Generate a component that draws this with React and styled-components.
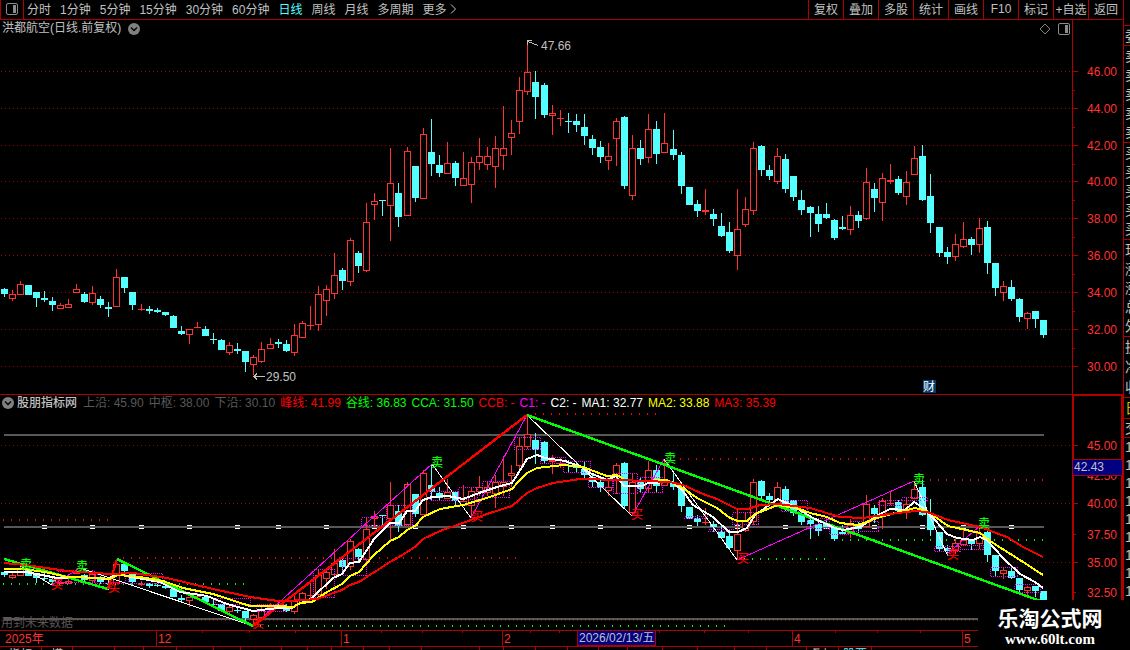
import styled, { createGlobalStyle } from "styled-components";

const colors = {
  frame: "#b00000",
  up: "#ff3232",
  down: "#54ffff",
  text: "#c0c0c0",
  dim: "#585858",
  grid: "#a00000",
};

const GlobalStyle = createGlobalStyle`
  * {
    box-sizing: border-box;
  }
  body {
    margin: 0;
    background: #000;
    color: ${colors.text};
    font-family: "Liberation Sans", "Noto Sans CJK SC", sans-serif;
    font-size: 12px;
  }
`;

const Page = styled.div`
  position: relative;
  display: grid;
  grid-template-columns: minmax(0, 1fr) 7px;
  height: 100vh;
  overflow: hidden;
`;

const Main = styled.main`
  display: flex;
  flex-direction: column;
  min-height: 0;
`;

const Toolbar = styled.nav`
  display: flex;
  justify-content: space-between;
  height: 20px;
  border-bottom: 1px solid ${colors.frame};
`;

const Periods = styled.div`
  display: flex;
  align-items: center;
  gap: 9px;
`;

const Actions = styled.div`
  display: flex;
`;

const BarButton = styled.button`
  display: flex;
  align-items: center;
  padding: 0 0 2px;
  border: none;
  background: none;
  color: ${(props) => (props.$active ? colors.down : colors.text)};
  font: inherit;
  white-space: nowrap;
  cursor: pointer;
`;

const LayoutButton = styled(BarButton)`
  justify-content: center;
  align-self: stretch;
  width: 24px;
  margin-right: -6px;
  border: 1px solid ${colors.frame};
  border-width: 0 1px;
`;

const ActionButton = styled(BarButton)`
  justify-content: center;
  width: 35px;
  border-left: 1px solid ${colors.frame};
`;

const Panel = styled.section`
  display: grid;
  grid-template-columns: minmax(0, 1fr) 51px;
`;

const Plot = styled.div`
  min-width: 0;
`;

const PlotHeader = styled.header`
  display: flex;
  align-items: center;
  gap: 7px;
  height: 18px;
  padding: 0 2px;
  line-height: 16px;
`;

const IndicatorHeader = styled(PlotHeader)`
  gap: 5px;
  padding-bottom: 2px;
  border-top: 1px solid ${colors.frame};
  white-space: nowrap;
`;

const Title = styled.h1`
  margin: 0;
  padding-bottom: 2px;
  font-size: 12px;
  font-weight: 400;
`;

const IndicatorName = styled.h2`
  margin: 0 1px 0 -2px;
  font-size: 12px;
  font-weight: 500;
`;

const Reading = styled.span`
  color: ${(props) => props.$color};
`;

const HeaderTools = styled.div`
  display: flex;
  align-items: center;
  gap: 7px;
  margin-left: auto;
`;

const Drawing = styled.svg`
  display: block;
  width: 100%;
  height: auto;
  font-size: 12px;
`;

const TabStrip = styled.div`
  display: flex;
  flex: 1;
  min-height: 0;
  overflow: hidden;
`;

const StripTab = styled.span`
  width: ${(props) => props.$width}px;
  border-right: 1px solid ${colors.frame};
  color: ${(props) => (props.$active ? colors.down : colors.text)};
  line-height: 17px;
  text-align: center;
  white-space: nowrap;
`;

const Quotes = styled.aside`
  border-left: 1px solid ${colors.frame};
  overflow: hidden;
`;

const QuoteGroup = styled.div`
  display: flex;
  flex-direction: column;
  height: ${(props) => props.$height}px;
  padding-left: 1px;
  border-bottom: ${(props) => (props.$open ? "none" : `1px solid ${colors.frame}`)};
  color: ${(props) => props.$color || colors.text};
  font-size: 14px;
`;

const QuoteRow = styled.span`
  display: flex;
  flex: 1;
  align-items: center;
  min-height: 0;
  line-height: 1;
  white-space: nowrap;
`;

const SiteBadge = styled.div`
  position: absolute;
  right: 0;
  bottom: 0;
  display: flex;
  flex-direction: column;
  align-items: center;
  width: 152px;
  height: 50px;
  padding: 8px 8px 0 0;
  background: #000;
  color: #fff;
`;

const SiteName = styled.strong`
  font-size: 21px;
  line-height: 22px;
`;

const SiteUrl = styled.a`
  color: #fff;
  font-family: "Liberation Serif", serif;
  font-size: 15px;
  font-weight: 700;
  line-height: 18px;
  text-decoration: none;
`;

// one row per day: high, open, close, low, as heights on the price chart
const days = [
  [288, 289, 294, 297], [290, 299, 294, 301], [281, 295, 284, 295], [285, 285, 295, 295],
  [292, 292, 298, 307], [291, 298, 300, 302], [297, 301, 305, 311], [303, 309, 305, 309],
  [299, 308, 304, 308], [284, 293, 289, 293], [292, 294, 302, 303], [286, 303, 293, 305],
  [296, 299, 305, 308], [302, 307, 309, 317], [269, 307, 277, 307], [277, 277, 288, 293],
  [292, 292, 305, 310], [304, 310, 309, 311], [306, 309, 311, 314], [308, 310, 312, 313],
  [312, 312, 315, 316], [315, 316, 328, 328], [326, 331, 334, 335], [329, 335, 329, 344],
  [322, 328, 327, 328], [326, 329, 336, 336], [333, 339, 340, 344], [339, 340, 350, 350],
  [342, 353, 345, 355], [343, 349, 351, 354], [351, 351, 362, 372], [355, 365, 357, 375],
  [342, 362, 349, 363], [338, 349, 344, 349], [339, 342, 344, 348], [340, 344, 351, 352],
  [324, 353, 335, 356], [321, 338, 323, 338], [306, 326, 325, 330], [286, 325, 294, 331],
  [285, 301, 289, 316], [253, 294, 275, 299], [268, 270, 281, 290], [238, 282, 240, 286],
  [251, 253, 266, 273], [203, 271, 222, 272], [193, 205, 201, 220], [200, 200, 201, 216],
  [148, 206, 183, 241], [183, 193, 217, 227], [147, 216, 151, 216], [166, 166, 198, 202],
  [128, 199, 134, 199], [119, 152, 164, 176], [155, 165, 173, 177], [142, 174, 163, 174],
  [161, 163, 178, 186], [152, 186, 178, 186], [157, 185, 162, 203], [138, 163, 156, 170],
  [147, 165, 156, 170], [136, 167, 148, 188], [106, 156, 148, 170], [120, 138, 133, 155],
  [77, 122, 90, 134], [42, 92, 72, 95], [71, 82, 97, 119], [83, 85, 115, 118],
  [105, 116, 113, 135], [110, 119, 118, 126], [113, 121, 122, 133], [114, 121, 125, 132],
  [114, 127, 136, 145], [135, 139, 148, 155], [141, 147, 157, 163], [143, 161, 156, 170],
  [118, 139, 121, 166], [116, 117, 186, 189], [135, 196, 148, 200], [140, 148, 159, 165],
  [114, 158, 129, 163], [121, 129, 154, 164], [113, 153, 143, 153], [130, 149, 155, 160],
  [152, 155, 186, 194], [187, 187, 205, 205], [200, 204, 211, 217], [189, 212, 210, 215],
  [209, 214, 219, 226], [213, 226, 236, 237], [222, 232, 251, 253], [189, 256, 229, 270],
  [197, 225, 209, 227], [142, 211, 148, 215], [145, 146, 170, 176], [165, 170, 176, 180],
  [148, 182, 156, 184], [154, 159, 189, 193], [176, 176, 197, 201], [190, 200, 210, 215],
  [206, 207, 213, 237], [206, 214, 224, 232], [203, 214, 218, 219], [219, 220, 238, 240],
  [216, 227, 229, 230], [206, 230, 215, 235], [211, 215, 221, 228], [168, 219, 182, 220],
  [183, 189, 198, 212], [173, 203, 178, 221], [164, 182, 180, 184], [176, 179, 193, 195],
  [171, 197, 182, 205], [146, 175, 158, 175], [145, 156, 200, 201], [174, 196, 223, 233],
  [227, 227, 253, 257], [247, 252, 257, 264], [234, 257, 244, 261], [222, 247, 239, 248],
  [237, 239, 245, 255], [218, 245, 228, 253], [221, 227, 263, 274], [263, 263, 288, 296],
  [281, 293, 286, 301], [280, 287, 299, 301], [298, 299, 317, 322], [312, 319, 313, 329],
  [311, 311, 319, 328], [320, 320, 335, 338],
];

const dayX = (i) => Math.floor(4.036 + 8.06004 * i);
const toIndicator = (y) => Math.round(433.8 + (y - 71.5) * 0.6345);

const ma1 =
  "4,572 25,572 37,574 57,578 80,577 108,579 117,574 137,578 160,582 180,592 207,596 227,604 253,611 278,608 292,608 297,605 312,598 333,578 342,574 350,563 359,562 374,539 390,523 399,523 407,511 415,511 423,500 432,497 448,496 463,499 482,492 497,487 512,483 519,472 527,459 537,455 545,458 565,461 582,467 590,473 607,480 616,476 624,486 642,486 648,483 672,482 682,490 693,505 713,517 729,532 738,532 747,528 755,515 765,508 778,499 793,506 813,518 835,528 843,530 860,527 880,514 890,509 905,510 914,502 922,507 935,520 947,534 957,538 973,540 980,537 987,540 1003,558 1020,574 1035,582 1043,588";
const ma2 =
  "4,569 25,569 50,573 67,577 100,578 110,579 118,575 140,577 163,581 183,588 213,594 250,606 278,606 293,607 300,603 312,602 327,592 342,584 350,576 359,572 374,555 390,541 399,537 407,530 415,526 423,517 440,509 463,505 487,498 512,489 519,481 527,473 537,468 563,465 583,467 607,476 617,475 625,480 640,481 667,480 680,486 697,498 717,508 730,518 738,521 747,521 755,514 778,505 797,508 810,513 827,517 840,523 858,525 880,517 903,511 915,508 927,511 948,526 980,533 993,543 1020,560 1043,575";
const ma3 =
  "4,563 25,565 67,571 110,574 133,573 167,578 213,589 250,597 278,601 288,601 317,599 342,590 350,585 359,582 390,562 399,557 415,547 423,539 440,531 463,523 487,514 512,506 527,493 537,488 553,483 580,479 620,480 670,482 683,485 703,494 717,499 737,509 748,509 760,505 778,504 810,508 840,517 863,518 890,514 915,511 927,512 948,520 980,527 1007,537 1023,547 1043,557";

const trendLines = [
  ["#00ff00", "4,559 108,589"],
  ["#ff0000", "108,589 117,559"],
  ["#00ff00", "117,559 253,626"],
  ["#ff0000", "253,626 527,415"],
  ["#00ff00", "527,415 1043,602"],
];

const swings = [
  ["#fff", "20,566 52,585"],
  ["#ff00ff", "52,585 80,568"],
  ["#fff", "80,568 253,626"],
  ["#ff00ff", "253,626 432,464"],
  ["#fff", "432,464 471,518"],
  ["#ff00ff", "471,518 527,415"],
  ["#fff", "527,415 632,516"],
  ["#ff00ff", "632,516 664,459"],
  ["#fff", "664,459 737,560"],
  ["#ff00ff", "737,560 914,481"],
  ["#fff", "914,481 947,554"],
  ["#ff00ff", "947,554 980,526"],
];

// from, to, height, color
const levels = [
  [3, 108, 520, "#ff0000"],
  [3, 246, 584, "#00ff00"],
  [123, 520, 558, "#ff0000"],
  [260, 730, 626, "#00ff00"],
  [535, 658, 414, "#ff0000"],
  [680, 907, 459, "#ff0000"],
  [744, 828, 559, "#00ff00"],
  [834, 1044, 540, "#00ff00"],
  [922, 1044, 480, "#ff0000"],
];

const pivots = [
  [57, 571, 94, 582], [94, 574, 125, 583], [128, 573, 162, 583], [215, 598, 250, 604],
  [256, 604, 285, 611], [313, 569, 334, 597], [342, 558, 366, 575], [361, 517, 386, 525],
  [386, 505, 412, 525], [430, 491, 458, 500], [458, 487, 477, 499], [482, 481, 509, 497],
  [514, 437, 540, 449], [540, 457, 565, 463], [563, 461, 590, 472], [588, 478, 612, 487],
  [613, 473, 637, 493], [639, 477, 662, 492], [684, 516, 707, 518], [708, 529, 733, 531],
  [732, 512, 758, 524], [781, 500, 807, 511], [807, 518, 829, 528], [829, 527, 852, 534],
  [850, 521, 878, 531], [878, 500, 901, 505], [901, 497, 927, 500], [934, 546, 960, 551],
  [960, 545, 983, 549], [990, 567, 1017, 576], [1014, 584, 1040, 592],
];

const signals = [
  ["卖", 26, 565], ["卖", 82, 567], ["卖", 437, 463], ["卖", 670, 459],
  ["卖", 919, 480], ["卖", 984, 524], ["买", 57, 585], ["买", 114, 588],
  ["买", 258, 624], ["买", 477, 517], ["买", 637, 515], ["买", 743, 559],
  ["买", 953, 555],
];

const beads = [5, 11, 17, 23, 29, 34, 40, 46, 51, 57, 63, 68, 74, 80, 85, 91, 97, 102, 108, 114, 119, 125];

const priceTicks = [71, 108, 145, 181, 218, 255, 292, 329, 366];

const indicatorTicks = [
  ["45.00", 445],
  ["42.50", 475],
  ["40.00", 503],
  ["37.50", 534],
  ["35.00", 562],
  ["32.50", 592],
];

const months = [
  ["2025年", 0],
  ["12", 156],
  ["1", 341],
  ["2", 502],
  ["4", 792],
  ["5", 962],
];

const weekTicks = [202, 249, 295, 381, 422, 462, 530, 559, 659, 704, 748, 835, 877, 920];

const periods = ["分时", "1分钟", "5分钟", "15分钟", "30分钟", "60分钟", "日线", "周线", "月线", "多周期"];

const actions = ["复权", "叠加", "多股", "统计", "画线", "F10", "标记", "+自选", "返回"];

const readings = [
  ["上沿: 45.90", colors.dim],
  ["中枢: 38.00", colors.dim],
  ["下沿: 30.10", colors.dim],
  ["峰线: 41.99", "#ff0000"],
  ["谷线: 36.83", "#00ff00"],
  ["CCA: 31.50", "#00ff00"],
  ["CCB: -", "#ff0000"],
  ["C1: -", "#ff00ff"],
  ["C2: -", "#fff"],
  ["MA1: 32.77", "#fff"],
  ["MA2: 33.88", "#ffff00"],
  ["MA3: 35.39", "#ff0000"],
];

const quoteGroups = [
  { height: 26, rows: [] },
  { height: 20, rows: ["委比"] },
  { height: 97, rows: ["卖五", "卖四", "卖三", "卖二", "卖一"] },
  { height: 97, rows: ["买一", "买二", "买三", "买四", "买五"] },
  { height: 97, rows: ["现价", "涨跌", "涨幅", "总量", "外盘"] },
  { height: 61, rows: ["换手", "净资", "收益"] },
  { height: 21, rows: ["日"], color: "#c8c800" },
  { height: 19, rows: ["交易"] },
  { height: 162, rows: Array(9).fill("14:5"), open: true },
];

const tabs = [42, 31, 42, 29, 33, 37, 27, 41, 26, 24, 32, 26, 32, 58, 24, 32, 32, 31, 29, 35, 35, 37, 32, 40, 32, 33];
const tabNames = { 0: "指标", 1: "模", 24: "叠加", 25: "股票" };

const PanelIcon = () => (
  <svg width="12" height="12" viewBox="0 0 12 12" aria-hidden="true">
    <rect x="0.5" y="0.5" width="11" height="11" rx="1.5" fill="none" stroke="#8c8c8c" />
    <rect x="7" y="2" width="3" height="8" fill="#8c8c8c" />
  </svg>
);

const ChevronIcon = () => (
  <svg width="12" height="12" viewBox="0 0 12 12" aria-hidden="true">
    <circle cx="6" cy="6" r="6" fill="#808080" />
    <path d="M3 4.5l3 3 3-3" fill="none" stroke="#000" strokeWidth="1.4" />
  </svg>
);

const Candles = ({ scale = (y) => y }) =>
  days.map((day, i) => {
    const [high, open, close, low] = day.map(scale);
    const x = dayX(i);
    const rising = day[2] < day[1];
    const color = rising ? colors.up : colors.down;
    const top = Math.min(open, close);
    const height = Math.max(1, Math.abs(open - close));
    return (
      <g key={i}>
        <rect x={x} y={high} width="1" height={Math.max(1, low - high)} fill={color} />
        <rect x={x - 3} y={top} width="7" height={height} fill={color} />
        {rising && height > 2 && (
          <rect x={x - 2} y={top + 1} width="5" height={height - 2} fill="#000" />
        )}
      </g>
    );
  });

const GridLine = ({ y }) => (
  <line x1="1" x2="1072" y1={y + 0.5} y2={y + 0.5} stroke={colors.grid} strokeDasharray="1 3" />
);

const PriceChart = () => (
  <Drawing viewBox="0 38 1072 356" shapeRendering="crispEdges" role="img" aria-label="日线">
    {priceTicks.map((y) => (
      <GridLine key={y} y={y} />
    ))}
    <Candles />
    <g stroke={colors.text} fill="none">
      <path d="M527.5 41.5l11 4M527.5 45v-4.5h4" />
      <path d="M254 376.5h11M257 373.5l-3 3 3 3" />
    </g>
    <text x="541" y="50" fill={colors.text}>47.66</text>
    <text x="266" y="381" fill={colors.text}>29.50</text>
    <rect x="923" y="380" width="13" height="13" fill="#003a70" />
    <text x="923" y="391" fill="#fff">财</text>
  </Drawing>
);

const PriceAxis = () => (
  <Drawing viewBox="1072 20 51 374" shapeRendering="crispEdges">
    <rect x="1072" y="20" width="1" height="374" fill={colors.frame} />
    {priceTicks.map((y, i) => (
      <g key={y}>
        <rect x="1073" y={y} width="5" height="1" fill={colors.frame} />
        {i < 8 && <rect x="1073" y={y + 19} width="2" height="1" fill={colors.frame} />}
        <text x="1087" y={y + 5} fill={colors.up}>{`${46 - i * 2}.00`}</text>
      </g>
    ))}
  </Drawing>
);

const IndicatorChart = () => (
  <Drawing viewBox="0 412 1072 218" shapeRendering="crispEdges" role="img" aria-label="股朋指标网">
    {[445, 503, 562, 620].map((y) => (
      <GridLine key={y} y={y} />
    ))}
    {[434, 526, 618].map((y) => (
      <rect key={y} x="4" y={y} width="1040" height="2" fill={colors.dim} />
    ))}
    {levels.map(([from, to, y, color]) => (
      <line key={y} x1={from} x2={to} y1={y} y2={y} stroke={color} strokeWidth="2" strokeDasharray="1 7" />
    ))}
    {beads.map((i) => (
      <g key={i} fill="#fff">
        <rect x={dayX(i) - 2} y="525" width="5" height="1" />
        <rect x={dayX(i) - 2} y="528" width="5" height="1" />
      </g>
    ))}
    <Candles scale={toIndicator} />
    <g fill="none" stroke="#ff00ff" strokeDasharray="1 1">
      {pivots.map(([x1, y1, x2, y2]) => (
        <rect key={x1} x={x1 + 0.5} y={y1 + 0.5} width={x2 - x1} height={y2 - y1} />
      ))}
    </g>
    <g fill="none">
      {swings.map(([color, points]) => (
        <polyline key={points} points={points} stroke={color} />
      ))}
    </g>
    <g fill="none" strokeWidth="2">
      {trendLines.map(([color, points]) => (
        <polyline key={points} points={points} stroke={color} strokeWidth="2.4" />
      ))}
      <polyline points={ma1} stroke="#fff" />
      <polyline points={ma2} stroke="#ffff00" />
      <polyline points={ma3} stroke="#ff0000" />
    </g>
    {signals.map(([label, x, y]) => (
      <text
        key={x}
        x={x}
        y={y + 4}
        textAnchor="middle"
        fontWeight="500"
        fill={label === "卖" ? "#00ff00" : "#ff0000"}
      >
        {label}
      </text>
    ))}
    <text x="1" y="627" fill={colors.dim}>用到未来数据</text>
  </Drawing>
);

const IndicatorAxis = () => (
  <Drawing viewBox="1072 394 51 236" shapeRendering="crispEdges">
    {indicatorTicks.map(([label, y], i) => (
      <g key={label}>
        <rect x="1073" y={y} width={i % 2 ? 3 : 5} height="1" fill={colors.frame} />
        <text x="1087" y={y + 5} fill={colors.up}>{label}</text>
      </g>
    ))}
    <rect x="1073" y="395" width="49" height="236" fill="none" stroke={colors.frame} strokeWidth="2" />
    <rect x="1074" y="459" width="48" height="17" fill={colors.frame} />
    <rect x="1073" y="460" width="49" height="15" fill="#000080" />
    <text x="1074" y="471" fill={colors.text}>42.43</text>
  </Drawing>
);

const DateAxis = () => (
  <Drawing viewBox="0 630 1123 17" shapeRendering="crispEdges">
    <g fill={colors.frame}>
      <rect x="0" y="630" width="1123" height="1" />
      <rect x="0" y="646" width="1123" height="1" />
      {weekTicks.map((x) => (
        <rect key={x} x={x} y="631" width="1" height="2" />
      ))}
    </g>
    {months.map(([label, x]) => (
      <g key={label}>
        {x > 0 && <rect x={x} y="631" width="1" height="15" fill={colors.frame} />}
        <text x={x > 0 ? x + 2 : 5} y="643" fill={colors.up}>{label}</text>
      </g>
    ))}
    <rect x="577" y="631" width="79" height="15" fill={colors.frame} />
    <rect x="578" y="631" width="77" height="14" fill="#000080" />
    <text x="579" y="642" fill={colors.text}>2026/02/13/五</text>
  </Drawing>
);

const App = () => {
  return (
    <Page>
      <GlobalStyle />
      <Main>
        <Toolbar>
          <Periods>
            <LayoutButton type="button" aria-label="布局">
              <PanelIcon />
            </LayoutButton>
            {periods.map((name) => (
              <BarButton key={name} type="button" $active={name === "日线"}>
                {name}
              </BarButton>
            ))}
            <BarButton type="button">
              更多
              <svg width="10" height="10" viewBox="0 0 10 10" aria-hidden="true">
                <path d="M4 0.5l4.5 4.5L4 9.5" fill="none" stroke={colors.text} />
              </svg>
            </BarButton>
          </Periods>
          <Actions>
            {actions.map((name) => (
              <ActionButton key={name} type="button">
                {name}
              </ActionButton>
            ))}
          </Actions>
        </Toolbar>
        <Panel>
          <Plot>
            <PlotHeader>
              <Title>洪都航空(日线.前复权)</Title>
              <ChevronIcon />
              <HeaderTools>
                <svg width="12" height="12" viewBox="0 0 12 12" aria-hidden="true">
                  <path d="M6 1l5 5-5 5-5-5z" fill="none" stroke="#808080" />
                </svg>
                <PanelIcon />
              </HeaderTools>
            </PlotHeader>
            <PriceChart />
          </Plot>
          <PriceAxis />
        </Panel>
        <Panel>
          <Plot>
            <IndicatorHeader>
              <ChevronIcon />
              <IndicatorName>股朋指标网</IndicatorName>
              {readings.map(([label, color]) => (
                <Reading key={label} $color={color}>
                  {label}
                </Reading>
              ))}
            </IndicatorHeader>
            <IndicatorChart />
          </Plot>
          <IndicatorAxis />
        </Panel>
        <DateAxis />
        <TabStrip>
          {tabs.map((width, i) => (
            <StripTab key={i} $width={width} $active={i === 25}>
              {tabNames[i]}
            </StripTab>
          ))}
        </TabStrip>
      </Main>
      <Quotes>
        {quoteGroups.map(({ height, rows, color, open }) => (
          <QuoteGroup key={rows[0] || "top"} $height={height} $color={color} $open={open}>
            {rows.map((row, i) => (
              <QuoteRow key={i}>{row}</QuoteRow>
            ))}
          </QuoteGroup>
        ))}
      </Quotes>
      <SiteBadge>
        <SiteName>乐淘公式网</SiteName>
        <SiteUrl href="http://www.60lt.com">www.60lt.com</SiteUrl>
      </SiteBadge>
    </Page>
  );
};

export default App;
